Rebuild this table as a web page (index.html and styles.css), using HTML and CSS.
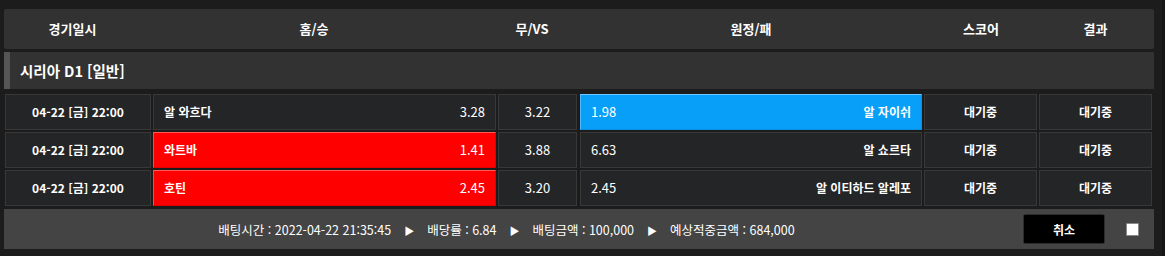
FILE: index.html
```html
<!DOCTYPE html>
<html lang="ko">
<head>
<meta charset="utf-8">
<link rel="stylesheet" href="styles.css">
</head>
<body>
<div class="wrap">
  <div class="head">
    <div class="h">경기일시</div>
    <div class="h">홈/승</div>
    <div class="h">무/VS</div>
    <div class="h">원정/패</div>
    <div class="h">스코어</div>
    <div class="h">결과</div>
  </div>
  <div class="league">시리아 D1 [일반]</div>
  <div class="rows">
    <div class="row">
      <div class="cell date">04-22 [금] 22:00</div>
      <div class="cell team"><span class="name">알 와흐다</span><span class="odd">3.28</span></div>
      <div class="cell vs">3.22</div>
      <div class="cell team sel-blue"><span class="odd">1.98</span><span class="name">알 자이쉬</span></div>
      <div class="cell stat">대기중</div>
      <div class="cell stat">대기중</div>
    </div>
    <div class="row">
      <div class="cell date">04-22 [금] 22:00</div>
      <div class="cell team sel-red"><span class="name">와트바</span><span class="odd">1.41</span></div>
      <div class="cell vs">3.88</div>
      <div class="cell team"><span class="odd">6.63</span><span class="name">알 쇼르타</span></div>
      <div class="cell stat">대기중</div>
      <div class="cell stat">대기중</div>
    </div>
    <div class="row">
      <div class="cell date">04-22 [금] 22:00</div>
      <div class="cell team sel-red"><span class="name">호틴</span><span class="odd">2.45</span></div>
      <div class="cell vs">3.20</div>
      <div class="cell team"><span class="odd">2.45</span><span class="name">알 이티하드 알레포</span></div>
      <div class="cell stat">대기중</div>
      <div class="cell stat">대기중</div>
    </div>
  </div>
  <div class="foot">
    <div class="info">배팅시간 : 2022-04-22 21:35:45<span class="arr">▶</span>배당률 : 6.84<span class="arr">▶</span>배팅금액 : 100,000<span class="arr">▶</span>예상적중금액 : 684,000</div>
    <button class="cancel">취소</button>
    <span class="chk"></span>
  </div>
</div>
</body>
</html>
```
FILE: styles.css
```css
html, body {
  margin: 0;
  padding: 0;
  background: #161616;
}
body {
  font-family: "Noto Sans CJK KR", "Noto Sans", sans-serif;
  color: #fff;
  font-size: 12px;
  width: 1165px;
  height: 256px;
  overflow: hidden;
}
.wrap {
  width: 1162px;
  height: 256px;
  background: #1c1c1c;
  padding: 9px 0 0 4px;
  box-sizing: border-box;
}
.head {
  width: 1150px;
  height: 40px;
  background: #323232;
  border-radius: 2px;
  display: grid;
  grid-template-columns: 137px 346px 90px 348px 112px 117px;
  align-items: center;
}
.h {
  text-align: center;
  font-weight: 700;
  font-size: 13px;
  line-height: 16px;
}
.league {
  margin-top: 3px;
  width: 1150px;
  height: 37px;
  box-sizing: border-box;
  background: #323232;
  border-left: 6px solid #555;
  padding-left: 10px;
  display: flex;
  align-items: center;
  font-weight: 700;
  font-size: 14.5px;
}
.rows {
  margin-top: 5px;
  margin-left: 1px;
  display: flex;
  flex-direction: column;
  gap: 2px;
}
.row {
  display: grid;
  grid-template-columns: 146px 343px 79px 343px 113px 113px;
  column-gap: 2px;
  height: 36px;
}
.row .cell:nth-child(4) { margin-left: 1px; }
.cell {
  background: #242527;
  border: 1px solid #383838;
  box-sizing: border-box;
  display: flex;
  align-items: center;
  justify-content: center;
  font-size: 12px;
  line-height: 16px;
}
.date { font-weight: 700; }
.vs, .odd { font-size: 13px; }
.team {
  justify-content: space-between;
  padding: 0 10px;
}
.name { font-weight: 700; }
.stat { font-weight: 700; }
.sel-red {
  background: #ff0000;
  border-color: #ff5a5a #e00000 #e00000 #ff4a4a;
}
.sel-blue {
  background: #079ff7;
  border-color: #6cc6ff #0a8fe0 #0a8fe0 #50b8ff;
}
.foot {
  margin-top: 3px;
  width: 1150px;
  height: 40px;
  background: #444;
  display: flex;
  align-items: center;
}
.info {
  flex: 1;
  text-align: center;
  font-size: 12.5px;
  padding-right: 14px;
}
.arr {
  font-size: 10px;
  margin: 0 13px;
}
.cancel {
  width: 82px;
  height: 30px;
  background: #000;
  border: 1px solid #2c2c2c;
  border-radius: 2px;
  color: #fff;
  font-family: inherit;
  font-weight: 700;
  font-size: 12px;
  padding: 0;
}
.chk {
  width: 11px;
  height: 11px;
  background: #fff;
  border: 1px solid #8a8a8a;
  border-radius: 1px;
  margin: 0 15px 0 21px;
}
```
